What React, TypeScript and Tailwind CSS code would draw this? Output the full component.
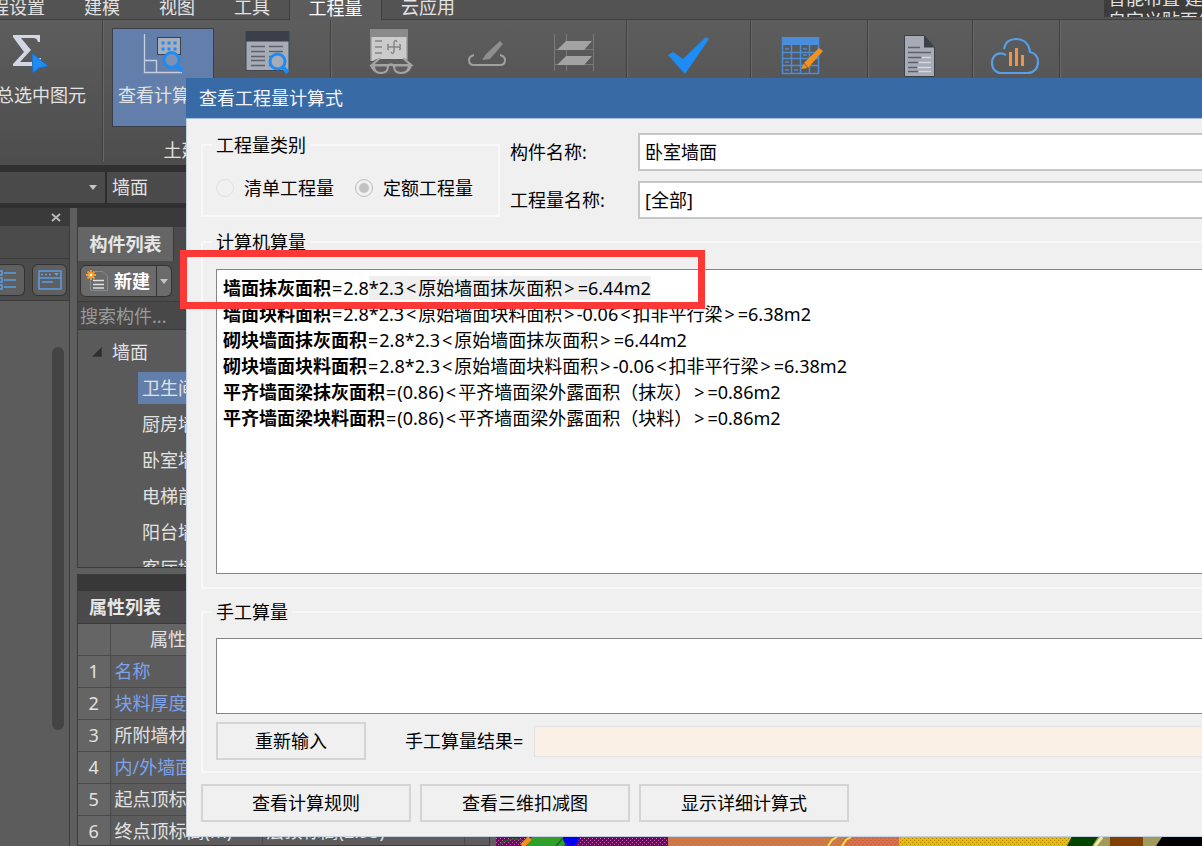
import React, { type ReactNode } from "react";

/* ---------- shared data ---------- */

const results: { name: string; expr: string; selectedFrom?: number }[] = [
  { name: "墙面抹灰面积", expr: "=2.8*2.3<原始墙面抹灰面积>=6.44m2", selectedFrom: 4 },
  { name: "墙面块料面积", expr: "=2.8*2.3<原始墙面块料面积>-0.06<扣非平行梁>=6.38m2" },
  { name: "砌块墙面抹灰面积", expr: "=2.8*2.3<原始墙面抹灰面积>=6.44m2" },
  { name: "砌块墙面块料面积", expr: "=2.8*2.3<原始墙面块料面积>-0.06<扣非平行梁>=6.38m2" },
  { name: "平齐墙面梁抹灰面积", expr: "=(0.86)<平齐墙面梁外露面积（抹灰）>=0.86m2" },
  { name: "平齐墙面梁块料面积", expr: "=(0.86)<平齐墙面梁外露面积（块料）>=0.86m2" },
];

const components = ["卫生间墙面", "厨房墙面", "卧室墙面", "电梯前室墙面", "阳台墙面", "客厅墙面"];

const properties = [
  { name: "名称", link: true, value: "" },
  { name: "块料厚度(mm)", link: true, value: "" },
  { name: "所附墙材质", link: false, value: "" },
  { name: "内/外墙面标志", link: true, value: "" },
  { name: "起点顶标高(m)", link: false, value: "" },
  { name: "终点顶标高(m)", link: false, value: "层顶标高(2.95)" },
];

/* ---------- icons ---------- */

function Icon({ children }: { children: ReactNode }) {
  return (
    <svg viewBox="0 0 48 48" className="h-12 w-12 shrink-0 overflow-visible" fill="none" aria-hidden="true">
      {children}
    </svg>
  );
}

const SumIcon = () => (
  <Icon>
    <path
      d="M5 3H32V10H30C29 7 28 6 25 6H13L23 18L12 30H26C29 30 30 29 31 26H33L32 34H5V32L16 20L5 5Z"
      fill="#d3d6e4"
    />
    <path d="M24 21L40 34L31 36L25 41Z" fill="#1e8cf5" stroke="#1b6fc4" strokeWidth="1" />
  </Icon>
);

const FormulaIcon = () => (
  <Icon>
    <path d="M5.500 2V40.500H43M5.500 28.500H17.500V40" stroke="#c6cee0" strokeWidth="1.300" />
    <rect x="18.500" y="5.500" width="23" height="17" fill="#a9aeba" stroke="#39404e" />
    {[24, 30, 36].map((x) => (
      <g key={x} fill="#1e8cf5">
        <rect x={x - 1.5} y="9.500" width="3" height="3" />
        <rect x={x - 1.5} y="15.500" width="3" height="3" />
      </g>
    ))}
    <circle cx="32.500" cy="28" r="7.500" fill="#7d91b4" stroke="#1e8cf5" strokeWidth="3" />
    <path d="M37.500 33.500L43 39" stroke="#1e8cf5" strokeWidth="4" />
  </Icon>
);

const ReportIcon = () => (
  <Icon>
    <rect x="3" y="-0.500" width="43" height="39" fill="#a7abb6" stroke="#41454e" />
    <rect x="3" y="-0.500" width="43" height="10" fill="#3b3f49" />
    {[14, 19, 24, 28, 33].map((y) => (
      <path key={y} d={`M8 ${y}.5H22M26 ${y}.5H40`} stroke="#5d616c" strokeWidth="1.500" />
    ))}
    <circle cx="34.500" cy="29.500" r="7.500" fill="#a7abb6" stroke="#1e8cf5" strokeWidth="3" />
    <path d="M39.500 35L45 40.500" stroke="#1e8cf5" strokeWidth="4" />
  </Icon>
);

const GlassesIcon = () => (
  <Icon>
    <rect x="4" y="-3" width="38" height="32" fill="#8a8a8a" />
    <rect x="5.500" y="5" width="35" height="24" fill="#cbcbcb" />
    <path d="M9 9H16M9 15H16M9 21H16" stroke="#858585" strokeWidth="1.500" />
    <path
      d="M31 10C30 8 28 8 28 11V19C28 22 26 22 25 20M23 17.500C21 17.500 21 15 23.500 15H32.500C35 15 35 12.500 33 12.500M23 12.500C21 12.500 21 15 23.500 15M32.500 15C35 15 35 17.500 33 17.500"
      stroke="#858585"
      strokeWidth="1.500"
    />
    <path d="M6 30C8 28 10 27 12 27H38C40 27 42 28 44 30L46 34L42 42H8L4 34Z" fill="#5c5c5c" />
    <path
      d="M14 26L6 33H45L37 26M5 34L9 39M45 34L42 39M22 34Q25 31 28 34"
      stroke="#a4a4a4"
      strokeWidth="2.200"
    />
    <path d="M8 33.500H22C22 39 20 41 15 41S8 39 8 33.500ZM28 33.500H43C43 39 40 41 35 41S28 39 28 33.500Z" stroke="#a4a4a4" strokeWidth="2.200" />
  </Icon>
);

const EditIcon = () => (
  <Icon>
    <path d="M11 23C7 24 6 26 6 28C6 31 8 33 11 33H37C40 33 42 31 42 28C42 26 41 24 37 23" stroke="#a0a0a0" strokeWidth="2" />
    <path d="M37 9L40 12L27 27L19 28L23 22Z" fill="#8e8e8e" />
  </Icon>
);

const LayersIcon = () => (
  <Icon>
    <path d="M5.500 2V39M17.500 2V39M44.500 2V39M5 17.500H44M5 32.500H44" stroke="#797979" />
    <path d="M8 18L17 9H43L35 18ZM8 33L17 24H43L35 33Z" fill="#a3a3a3" />
  </Icon>
);

const CheckIcon = () => (
  <Icon>
    <path d="M3 23L8 20L18 27L41 5L44 7L20 42Z" fill="#1e8cf5" />
  </Icon>
);

const TableEditIcon = () => (
  <Icon>
    <rect x="5" y="5" width="37" height="8" fill="#4a8ddb" />
    <path
      d="M5.500 5V41.500H41.500V5M14.500 13V41M23.500 13V41M32.500 13V41M5 20.500H42M5 26.500H42M5 33.500H42"
      stroke="#4a8ddb"
      strokeWidth="1.500"
    />
    <path d="M8 17H12M26 17H30M8 30H12M8 38H12M17 38H21M26 23H30" stroke="#4a8ddb" strokeWidth="1.500" />
    <path d="M42 16L46 19L31 36L24 37L27 31Z" fill="#f0921e" />
    <path d="M27 31L31 36" stroke="#8a5a20" />
  </Icon>
);

const DocumentIcon = () => (
  <Icon>
    <path d="M8.500 3.500H28L38.500 15V44.500H8.500Z" fill="#a7abb6" stroke="#3b3f49" />
    <path d="M28 3V15.500H38.500Z" fill="#3b3f49" />
    <path d="M12 15.500H24M12 20.500H35M12 25.500H25M12 30.500H22M12 35.500H21M12 39.500H22" stroke="#5d616c" strokeWidth="1.600" />
    <path d="M26 25.500H35M23 30.500H35M22 35.500H35M23 39.500H35" stroke="#d5d8e0" strokeWidth="1.500" />
  </Icon>
);

const CloudIcon = () => (
  <Icon>
    <path
      d="M14 23C7 19 0 23 0 31C0 37 4 41 9 41H36C42 41 46 36 46 30C46 25 43 21 38 20C37 12 32 7 24 7C17 7 13 11 12 17"
      stroke="#56a0ea"
      strokeWidth="2.200"
    />
    <path d="M18.500 20V34M24.500 16V34M30.500 23V34" stroke="#f0924a" strokeWidth="3" />
  </Icon>
);

const Caret = () => (
  <svg viewBox="0 0 8 5" className="h-[5px] w-2" aria-hidden="true">
    <path d="M0 0H8L4 5Z" fill="#c4c4c4" />
  </svg>
);

/* ---------- ribbon ---------- */

function RibbonGroup({ className, caption, children }: { className: string; caption?: string; children: ReactNode }) {
  return (
    <div className={`flex shrink-0 flex-col border-r border-[#404040] shadow-[1px_0_0_#686868] ${className}`}>
      <div className="flex pt-2">{children}</div>
      {caption && <div className="mt-[11px] pl-[2px] text-center leading-6">{caption}</div>}
    </div>
  );
}

function RibbonButton({ className, title, label, active, children }: { className: string; title: string; label?: string; active?: boolean; children: ReactNode }) {
  return (
    <button
      type="button"
      aria-label={title}
      className={`flex h-[99px] shrink-0 flex-col items-center gap-[3px] border pt-[3px] whitespace-nowrap ${
        active ? "border-[#3a3f49] bg-[#627fac]" : "border-transparent"
      } ${className}`}
    >
      {children}
      {label && <span className="leading-6">{label}</span>}
    </button>
  );
}

function TabBar() {
  return (
    <div className="flex h-5 shrink-0 items-end bg-[#535353]">
      <nav className="flex h-full items-end overflow-hidden">
        <div className="flex h-full items-end gap-[39px] border-r border-b border-[#3e3e3e] pr-[19px]">
          {["工程设置", "建模", "视图", "工具"].map((t, i) => (
            <button key={t} type="button" className={`leading-6 whitespace-nowrap ${i === 0 ? "-ml-[27px]" : ""}`}>
              {t}
            </button>
          ))}
        </div>
        <button type="button" className="w-[91px] bg-[#5c5c5c] text-center leading-6 text-white">
          工程量
        </button>
      </nav>
      <div className="flex h-full flex-1 items-end justify-between border-b border-l border-[#3e3e3e] pl-[19px]">
        <button type="button" className="leading-6">
          云应用
        </button>
        <div className="mb-[2px] flex h-[17px] w-[98px] flex-col justify-center overflow-hidden bg-[#3d3d3d] pl-1 whitespace-nowrap">
          <span className="leading-[22px]">智能布置 建</span>
          <span className="leading-[22px]">自定义贴面年</span>
        </div>
      </div>
    </div>
  );
}

function Ribbon() {
  return (
    <div className="flex h-[145px] shrink-0 overflow-hidden bg-linear-to-b from-[#5d5d5d] to-[#4d4d4d] pb-1">
      <RibbonGroup className="w-[103px]">
        <RibbonButton className="-ml-[24px] w-28" title="汇总选中图元" label="汇总选中图元">
          <SumIcon />
        </RibbonButton>
      </RibbonGroup>
      <RibbonGroup className="w-[228px]" caption="土建计算结果">
        <RibbonButton className="ml-[9px] w-[102px]" title="查看计算式" label="查看计算式" active>
          <FormulaIcon />
        </RibbonButton>
        <RibbonButton className="w-[106px]" title="查看工程量">
          <ReportIcon />
        </RibbonButton>
      </RibbonGroup>
      <RibbonGroup className="w-[296px] pl-[10px]">
        <RibbonButton className="w-[98px]" title="查看三维扣减">
          <GlassesIcon />
        </RibbonButton>
        <RibbonButton className="w-24" title="编辑">
          <EditIcon />
        </RibbonButton>
        <RibbonButton className="w-[76px]" title="分层">
          <LayersIcon />
        </RibbonButton>
      </RibbonGroup>
      <RibbonGroup className="w-[124px]">
        <RibbonButton className="w-full" title="合法性检查">
          <CheckIcon />
        </RibbonButton>
      </RibbonGroup>
      <RibbonGroup className="w-[117px]">
        <RibbonButton className="w-[100px]" title="表格算量">
          <TableEditIcon />
        </RibbonButton>
      </RibbonGroup>
      <RibbonGroup className="w-[105px]">
        <RibbonButton className="w-full" title="查看报表">
          <DocumentIcon />
        </RibbonButton>
      </RibbonGroup>
      <RibbonGroup className="w-[87px]">
        <RibbonButton className="w-full" title="云指标">
          <CloudIcon />
        </RibbonButton>
      </RibbonGroup>
    </div>
  );
}

/* ---------- docked panels ---------- */

function ViewPanel() {
  return (
    <aside className="flex w-[70px] shrink-0 flex-col border-r border-[#3b3b3b] bg-[#5c5c5c]">
      <div className="flex h-[18px] shrink-0 items-center justify-end bg-[#3a3a3a] pr-2">
        <button type="button" aria-label="关闭" className="flex">
          <svg viewBox="0 0 10 9" className="h-[9px] w-[10px]" aria-hidden="true">
            <path d="M1 1L9 8M9 1L1 8" stroke="#b8b8b8" strokeWidth="2" />
          </svg>
        </button>
      </div>
      <div className="h-[33px] shrink-0 border-b border-[#3b3b3b] bg-[#4b4b4b]" />
      <div className="flex h-[42px] shrink-0 items-center gap-[7px] border-b border-[#3b3b3b] bg-[#4b4b4b]">
        <button type="button" aria-label="列表" className="flex h-8 w-[25px] items-center rounded-r-md border border-l-0 border-[#333] bg-[#5f5f5f]">
          <svg viewBox="0 0 17 22" className="h-[22px] w-[17px]" fill="none" stroke="#5b9fe6" strokeWidth="1.500" aria-hidden="true">
            <path d="M4 4H16M4 11H16M4 18H16" />
            <path d="M-2 2H2V6H-2ZM-2 9H2V13H-2ZM-2 16H2V20H-2Z" />
          </svg>
        </button>
        <button type="button" aria-label="窗口" className="flex h-8 w-[35px] items-center justify-center rounded-md border border-[#333] bg-[#5f5f5f]">
          <svg viewBox="0 0 24 20" className="h-5 w-6" fill="none" stroke="#5b9fe6" strokeWidth="1.500" aria-hidden="true">
            <path d="M1 1H23V19H1ZM1 8H23M4 12H15" />
            <path d="M3 4.500H5M7 4.500H9M11 4.500H13" />
            <path d="M16 3H21L18.500 6Z" fill="#5b9fe6" stroke="none" />
          </svg>
        </button>
      </div>
      <div className="flex flex-1 justify-end pt-[46px] pr-[5px]">
        <div className="h-[383px] w-3 rounded-full bg-[#444]" />
      </div>
    </aside>
  );
}

function ComponentPanel() {
  return (
    <section className="flex shrink-0 flex-col border border-t-0 border-[#3b3b3b] bg-[#5a5a5a]">
      <div className="h-[19px] shrink-0 bg-[#3a3a3a]" />
      <div className="flex h-[34px] shrink-0 bg-[#4b4b4b]">
        <button type="button" className="w-24 border-r border-[#3b3b3b] bg-[#656565] font-bold text-[#e6e6e6]">
          构件列表
        </button>
      </div>
      <div className="flex h-[41px] shrink-0 items-center border-b border-[#3b3b3b] bg-[#4b4b4b] pl-[2px]">
        <button type="button" className="flex h-8 w-[77px] items-center gap-[5px] rounded-l-md border border-[#333] bg-[#6b6b6b] pl-[5px] font-bold text-white">
          <svg viewBox="0 0 23 22" className="h-[22px] w-[23px]" fill="none" aria-hidden="true">
            <path d="M4.500 4V20.500H21.500V6L17 1.500H9" stroke="#7f8a92" />
            <path d="M7 10.500H18M7 14.500H18M7 18H18" stroke="#e0e0e0" strokeWidth="1.600" />
            <path d="M5 0V10M0 5H10M1.500 1.500L8.500 8.500M8.500 1.500L1.500 8.500" stroke="#f5a030" strokeWidth="1.800" />
            <circle cx="5" cy="5" r="1.200" fill="#fff" />
          </svg>
          新建
        </button>
        <button type="button" aria-label="新建选项" className="flex h-8 w-[15px] items-center justify-center rounded-r-md border border-l-0 border-[#333] bg-[#6b6b6b]">
          <Caret />
        </button>
      </div>
      <input
        aria-label="搜索构件"
        placeholder="搜索构件..."
        className="h-7 shrink-0 border-b border-[#3b3b3b] bg-[#484848] px-[2px] placeholder:text-[#9a9a9a]"
      />
      <ul className="h-[237px] overflow-hidden pt-1">
        <li>
          <div className="flex h-9 items-center gap-[10px] pl-[14px]">
            <svg viewBox="0 0 10 10" className="h-[10px] w-[10px]" aria-hidden="true">
              <path d="M0.500 9.500H9.500V0.500Z" fill="#2e2e2e" stroke="#3b3b3b" />
            </svg>
            墙面
          </div>
          <ul>
            {components.map((c, i) => (
              <li key={c} className="flex h-9 items-center pl-[60px]">
                <span className={`flex h-8 flex-1 items-center pl-1 ${i === 0 ? "bg-[#627fac]" : ""}`}>{c}</span>
              </li>
            ))}
          </ul>
        </li>
      </ul>
    </section>
  );
}

function PropertyPanel() {
  return (
    <section className="mt-[6px] flex flex-1 flex-col overflow-hidden border border-[#3b3b3b] bg-[#5c5c5c]">
      <div className="h-4 shrink-0 bg-[#383838]" />
      <h2 className="h-[33px] shrink-0 border-b border-[#3b3b3b] bg-[#4a4a4a] pl-[11px] leading-8 font-bold text-[#e6e6e6]">属性列表</h2>
      <table className="w-[387px] table-fixed border-collapse whitespace-nowrap">
        <thead>
          <tr className="h-[31px] bg-[#656565]">
            <th aria-label="序号" className="w-8 border-r border-b border-[#4a4a4a]" />
            <th className="w-[152px] border-r border-b border-[#4a4a4a] p-0 font-normal">属性名称</th>
            <th className="border-r border-b border-[#4a4a4a] p-0 font-normal">属性值</th>
          </tr>
        </thead>
        <tbody>
          {properties.map((p, i) => (
            <tr key={p.name} className="h-8">
              <td className="border-r border-b border-[#4a4a4a] bg-[#656565] p-0 text-center">{i + 1}</td>
              <td className={`border-r border-b border-[#4a4a4a] p-0 pl-1 ${p.link ? "text-[#7da2ea]" : ""}`}>{p.name}</td>
              <td className="border-r border-b border-[#4a4a4a] p-0 pl-1">{p.value}</td>
            </tr>
          ))}
        </tbody>
      </table>
    </section>
  );
}

/* Model viewport: hatched wall and floor fills */
function Viewport() {
  return (
    <div className="flex flex-1 items-end overflow-hidden bg-black">
      <svg viewBox="0 0 706 12" className="h-3 w-[706px] shrink-0" aria-hidden="true">
        <defs>
          <pattern id="purple" width="4" height="4" patternUnits="userSpaceOnUse">
            <rect width="4" height="4" fill="#6a0a64" />
            <rect width="1" height="1" fill="#c070a8" />
            <rect x="2" y="2" width="1" height="1" fill="#b060a0" />
          </pattern>
          <pattern id="orange" width="4" height="4" patternUnits="userSpaceOnUse">
            <rect width="4" height="4" fill="#d07a40" />
            <rect width="1" height="1" fill="#c0704a" />
            <rect x="2" y="2" width="1" height="1" fill="#c0704a" />
          </pattern>
          <pattern id="coral" width="4" height="4" patternUnits="userSpaceOnUse">
            <rect width="4" height="4" fill="#d27a3c" />
            <rect width="2" height="1" fill="#cc5a50" />
            <rect x="2" y="2" width="2" height="1" fill="#cc5a50" />
          </pattern>
          <pattern id="yellow" width="4" height="4" patternUnits="userSpaceOnUse">
            <rect width="4" height="4" fill="#d8c400" />
            <rect width="1" height="1" fill="#c07c10" />
            <rect x="2" y="2" width="1" height="1" fill="#c07c10" />
          </pattern>
        </defs>
        <rect width="706" height="12" fill="#000" />
        <rect width="172" height="12" fill="url(#purple)" />
        <path d="M38 0H76L68 12H30Z" fill="#2ea02a" />
        <path d="M4 10Q14 3 26 6M60 12L68 3" stroke="#1d6a1d" strokeWidth="1.500" fill="none" />
        <path d="M26 12L34 4" stroke="#f09020" strokeWidth="5" />
        <circle cx="75" cy="4" r="8" fill="#0000f5" />
        <rect x="172" width="175" height="12" fill="url(#orange)" />
        <rect x="347" width="56" height="12" fill="url(#coral)" />
        <path d="M332 12L336 6L341 3M346 12L350 6L355 3" stroke="#f5e24a" strokeWidth="2" fill="none" />
        <rect x="403" width="174" height="12" fill="url(#yellow)" />
        <path d="M577 0H606L596 12H571Z" fill="#004400" />
        <path d="M602 3H614V12H596Z" fill="#a09a5c" />
        <path d="M606 3L599 12" stroke="#f0eaa0" strokeWidth="3" />
        <rect x="614" width="33" height="12" fill="#804000" />
        <path d="M647 0H668L660 12H647Z" fill="#a09a5c" />
      </svg>
    </div>
  );
}

/* ---------- calculation dialog ---------- */

function Expression({ text, offset = 0 }: { text: string; offset?: number }) {
  return (
    <>
      {text.split("").map((ch, i) => {
        if (ch === "=") {
          return (
            <span key={i} className={i + offset === 0 ? "px-px" : "pl-px"}>
              {ch}
            </span>
          );
        }
        if (ch === "<" || ch === ">") {
          return (
            <span key={i} className="px-[2px]">
              {ch}
            </span>
          );
        }
        return ch;
      })}
    </>
  );
}

function GroupBox({ title, className = "", children }: { title: string; className?: string; children: ReactNode }) {
  return (
    <fieldset className={`min-w-0 border-2 border-[#f8f8f8] px-[13px] ${className}`}>
      <legend className="-ml-1 px-1 leading-6">{title}</legend>
      {children}
    </fieldset>
  );
}

function DialogButton({ className, children }: { className: string; children: ReactNode }) {
  return (
    <button type="button" className={`h-[38px] border-2 border-[#d4d4d4] bg-[#f0f0f0] text-center ${className}`}>
      {children}
    </button>
  );
}

function CalcDialog() {
  return (
    <div
      role="dialog"
      aria-label="查看工程量计算式"
      className="absolute top-[78px] -right-12 left-[186px] border-b border-l border-[#c5d0e0] bg-[#f0f0f0] text-black"
    >
      <h1 className="-ml-px h-[41px] border-b border-[#a9c0de] bg-[#386aa5] pl-[13px] leading-10 text-[#f2f5fa]">查看工程量计算式</h1>
      <div className="flex flex-col gap-[11px] px-[14px] py-[14px]">
        <div className="flex gap-[10px]">
          <GroupBox title="工程量类别" className="h-[84px] w-[299px] shrink-0">
            <div className="flex items-center gap-[21px] pt-[19px] leading-6">
              <label className="flex items-center gap-[10px]">
                <input type="radio" name="kind" className="h-[18px] w-[18px] appearance-none rounded-full border border-[#e0e0e0]" />
                清单工程量
              </label>
              <label className="flex items-center gap-[10px]">
                <input
                  type="radio"
                  name="kind"
                  defaultChecked
                  className="h-[18px] w-[18px] appearance-none rounded-full border border-[#bdbdbd] checked:bg-[#c2c2c2] checked:bg-clip-content checked:p-[3px]"
                />
                定额工程量
              </label>
            </div>
          </GroupBox>
          <div className="flex flex-1 flex-col gap-[10px]">
            <div className="flex h-[38px] items-center">
              <label htmlFor="component" className="w-[128px] shrink-0">
                构件名称:
              </label>
              <select id="component" className="h-full flex-1 appearance-none border-2 border-[#c6c6c6] bg-white pl-[5px]">
                <option>卧室墙面</option>
              </select>
            </div>
            <div className="flex h-[38px] items-center">
              <label htmlFor="quantity" className="w-[128px] shrink-0">
                工程量名称:
              </label>
              <select id="quantity" className="h-full flex-1 appearance-none border-2 border-[#c6c6c6] bg-white pl-[5px]">
                <option>[全部]</option>
              </select>
            </div>
          </div>
        </div>

        <GroupBox title="计算机算量" className="pt-[15px] pb-[13px]">
          <div className="h-[305px] border border-[#858585] bg-white pt-[5px] pl-[6px] leading-[26px] whitespace-nowrap">
            {results.map((r) => (
              <p key={r.name}>
                <b>{r.name}</b>
                {r.selectedFrom ? (
                  <>
                    <Expression text={r.expr.slice(0, r.selectedFrom)} />
                    <span className="bg-[#efefef]">
                      <Expression text={r.expr.slice(r.selectedFrom)} offset={r.selectedFrom} />
                    </span>
                  </>
                ) : (
                  <Expression text={r.expr} />
                )}
              </p>
            ))}
          </div>
        </GroupBox>

        <GroupBox title="手工算量" className="pt-[14px] pb-[11px]">
          <textarea aria-label="手工算量" className="block h-[76px] w-full resize-none border border-[#858585] bg-white px-[5px]" />
          <div className="mt-2 flex items-center">
            <DialogButton className="w-[150px]">重新输入</DialogButton>
            <label htmlFor="manual-result" className="ml-[39px]">
              手工算量结果=
            </label>
            <input id="manual-result" readOnly className="ml-[11px] h-[31px] flex-1 border border-[#e3e3e3] bg-[#faf0e6] px-1" />
          </div>
        </GroupBox>

        <div className="flex gap-[9px]">
          <DialogButton className="w-[210px]">查看计算规则</DialogButton>
          <DialogButton className="w-[210px]">查看三维扣减图</DialogButton>
          <DialogButton className="w-[210px]">显示详细计算式</DialogButton>
        </div>
      </div>
    </div>
  );
}

/* ---------- page ---------- */

export default function App() {
  return (
    <div className="relative flex h-screen flex-col overflow-hidden bg-[#333] font-['Noto_Sans','Noto_Sans_CJK_SC',sans-serif] text-[18px] text-[#e2e2e2]">
      <TabBar />
      <Ribbon />
      <div className="flex h-[43px] shrink-0 gap-[2px] border-t-[7px] border-b-[5px] border-[#303030] bg-[#2c2c2c]">
        <div className="flex w-[105px] items-center bg-[#4a4a4a] pr-2">
          <select aria-label="楼层" className="h-full min-w-0 flex-1 appearance-none bg-transparent" />
          <Caret />
        </div>
        <select aria-label="构件类型" className="w-[180px] appearance-none bg-[#4a4a4a] pl-[5px]">
          <option>墙面</option>
        </select>
      </div>
      <main className="flex min-h-0 flex-1 bg-[#5e5e5e]">
        <ViewPanel />
        <div className="ml-[7px] flex w-[413px] shrink-0 flex-col">
          <ComponentPanel />
          <PropertyPanel />
        </div>
        <div className="w-[6px] shrink-0" />
        <Viewport />
      </main>
      <CalcDialog />
      <div className="pointer-events-none absolute top-[250px] left-[180px] h-[59px] w-[525px] border-[7px] border-[#fd3836]" />
    </div>
  );
}
